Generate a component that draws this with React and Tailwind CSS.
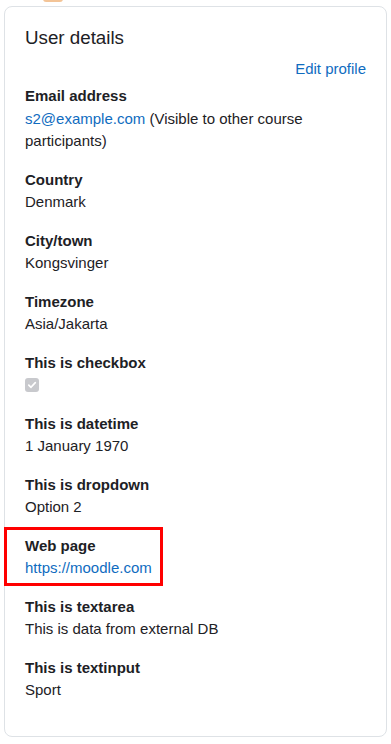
import React from "react";

function Item({ label, children, highlight }) {
  return (
    <div className="relative mb-4">
      {highlight && (
        <div className="absolute left-[-21px] top-[-8px] h-[59px] w-[159px] border-[3px] border-[#ff0000] pointer-events-none" />
      )}
      <div className="font-bold">{label}</div>
      <div>{children}</div>
    </div>
  );
}

export default function App() {
  return (
    <div
      className="relative w-[391px] h-[744px] bg-white px-[4px] pt-[6px] text-[15px] leading-[22.5px] text-[#1d2125] overflow-hidden"
      style={{ fontFamily: '"Liberation Sans", Arial, sans-serif' }}
    >
      <div className="absolute left-[43px] top-[-4px] h-[6px] w-[20px] rounded-full bg-[#f3c497]" />
      <div className="h-[731px] rounded-[8px] border border-[#dee2e6] px-5 pt-5">
        <h5 className="text-[18.75px] leading-[22.5px] mb-2">User details</h5>
        <div className="text-right text-[#0f6cbf] mb-[5px]">Edit profile</div>
        <Item label="Email address">
          <span className="text-[#0f6cbf]">s2@example.com</span> (Visible to other course participants)
        </Item>
        <Item label="Country">Denmark</Item>
        <Item label="City/town">Kongsvinger</Item>
        <Item label="Timezone">Asia/Jakarta</Item>
        <Item label="This is checkbox">
          <div className="h-[22.5px] flex items-center">
            <div className="w-[14px] h-[14px] rounded-[3px] bg-[#c8c9cd] flex items-center justify-center">
              <svg width="10" height="10" viewBox="0 0 10 10">
                <path d="M1.8 5.2 L4 7.3 L8.3 2.6" fill="none" stroke="white" strokeWidth="1.7" strokeLinecap="round" strokeLinejoin="round" />
              </svg>
            </div>
          </div>
        </Item>
        <Item label="This is datetime">1 January 1970</Item>
        <Item label="This is dropdown">Option 2</Item>
        <Item label="Web page" highlight>
          <span className="text-[#0f6cbf]">https://moodle.com</span>
        </Item>
        <Item label="This is textarea">This is data from external DB</Item>
        <Item label="This is textinput">Sport</Item>
      </div>
    </div>
  );
}
